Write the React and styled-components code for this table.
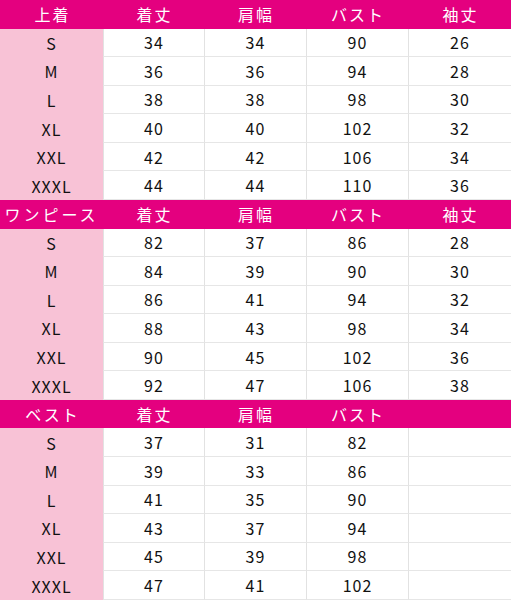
import React from 'react';
import styled, { createGlobalStyle } from 'styled-components';

const GlobalStyle = createGlobalStyle`
  html, body {
    margin: 0;
    padding: 0;
    background: #ffffff;
  }
  body {
    font-family: "Noto Sans CJK JP", "Noto Sans", sans-serif;
  }
`;

const Table = styled.div`
  width: 511px;
  display: grid;
  grid-template-columns: 103px 101px 102px 102px 103px;
  grid-auto-rows: 28.57px;
  border-right: 1px solid #e2e2e2;
  box-sizing: border-box;
`;

const HeadCell = styled.div`
  background: #e4007f;
  color: #ffffff;
  display: flex;
  align-items: center;
  justify-content: center;
  font-size: 16px;
  letter-spacing: ${(p) => (p.$wide ? '3px' : '2px')};
  padding-left: ${(p) => (p.$wide ? '0' : '2px')};
  white-space: nowrap;
  overflow: hidden;
`;

const SizeCell = styled.div`
  background: #f8c2d6;
  color: #111111;
  display: flex;
  align-items: center;
  justify-content: center;
  font-size: 16px;
  letter-spacing: 1px;
`;

const Cell = styled.div`
  background: #ffffff;
  color: #111111;
  display: flex;
  align-items: center;
  justify-content: center;
  font-size: 16px;
  letter-spacing: 1px;
  border-left: 1px solid #e2e2e2;
  border-bottom: 1px solid #e6e6e6;
  box-sizing: border-box;
`;

const sizes = ['S', 'M', 'L', 'XL', 'XXL', 'XXXL'];

const sections = [
  {
    title: '上着',
    cols: ['着丈', '肩幅', 'バスト', '袖丈'],
    rows: [
      [34, 34, 90, 26],
      [36, 36, 94, 28],
      [38, 38, 98, 30],
      [40, 40, 102, 32],
      [42, 42, 106, 34],
      [44, 44, 110, 36],
    ],
  },
  {
    title: 'ワンピース',
    wide: true,
    cols: ['着丈', '肩幅', 'バスト', '袖丈'],
    rows: [
      [82, 37, 86, 28],
      [84, 39, 90, 30],
      [86, 41, 94, 32],
      [88, 43, 98, 34],
      [90, 45, 102, 36],
      [92, 47, 106, 38],
    ],
  },
  {
    title: 'ベスト',
    cols: ['着丈', '肩幅', 'バスト', ''],
    rows: [
      [37, 31, 82, ''],
      [39, 33, 86, ''],
      [41, 35, 90, ''],
      [43, 37, 94, ''],
      [45, 39, 98, ''],
      [47, 41, 102, ''],
    ],
  },
];

export default function App() {
  return (
    <>
      <GlobalStyle />
      <Table>
        {sections.map((sec) => (
          <React.Fragment key={sec.title}>
            <HeadCell $wide={sec.wide}>{sec.title}</HeadCell>
            {sec.cols.map((c, i) => (
              <HeadCell key={i}>{c}</HeadCell>
            ))}
            {sec.rows.map((row, r) => (
              <React.Fragment key={r}>
                <SizeCell>{sizes[r]}</SizeCell>
                {row.map((v, i) => (
                  <Cell key={i}>{v}</Cell>
                ))}
              </React.Fragment>
            ))}
          </React.Fragment>
        ))}
      </Table>
    </>
  );
}
